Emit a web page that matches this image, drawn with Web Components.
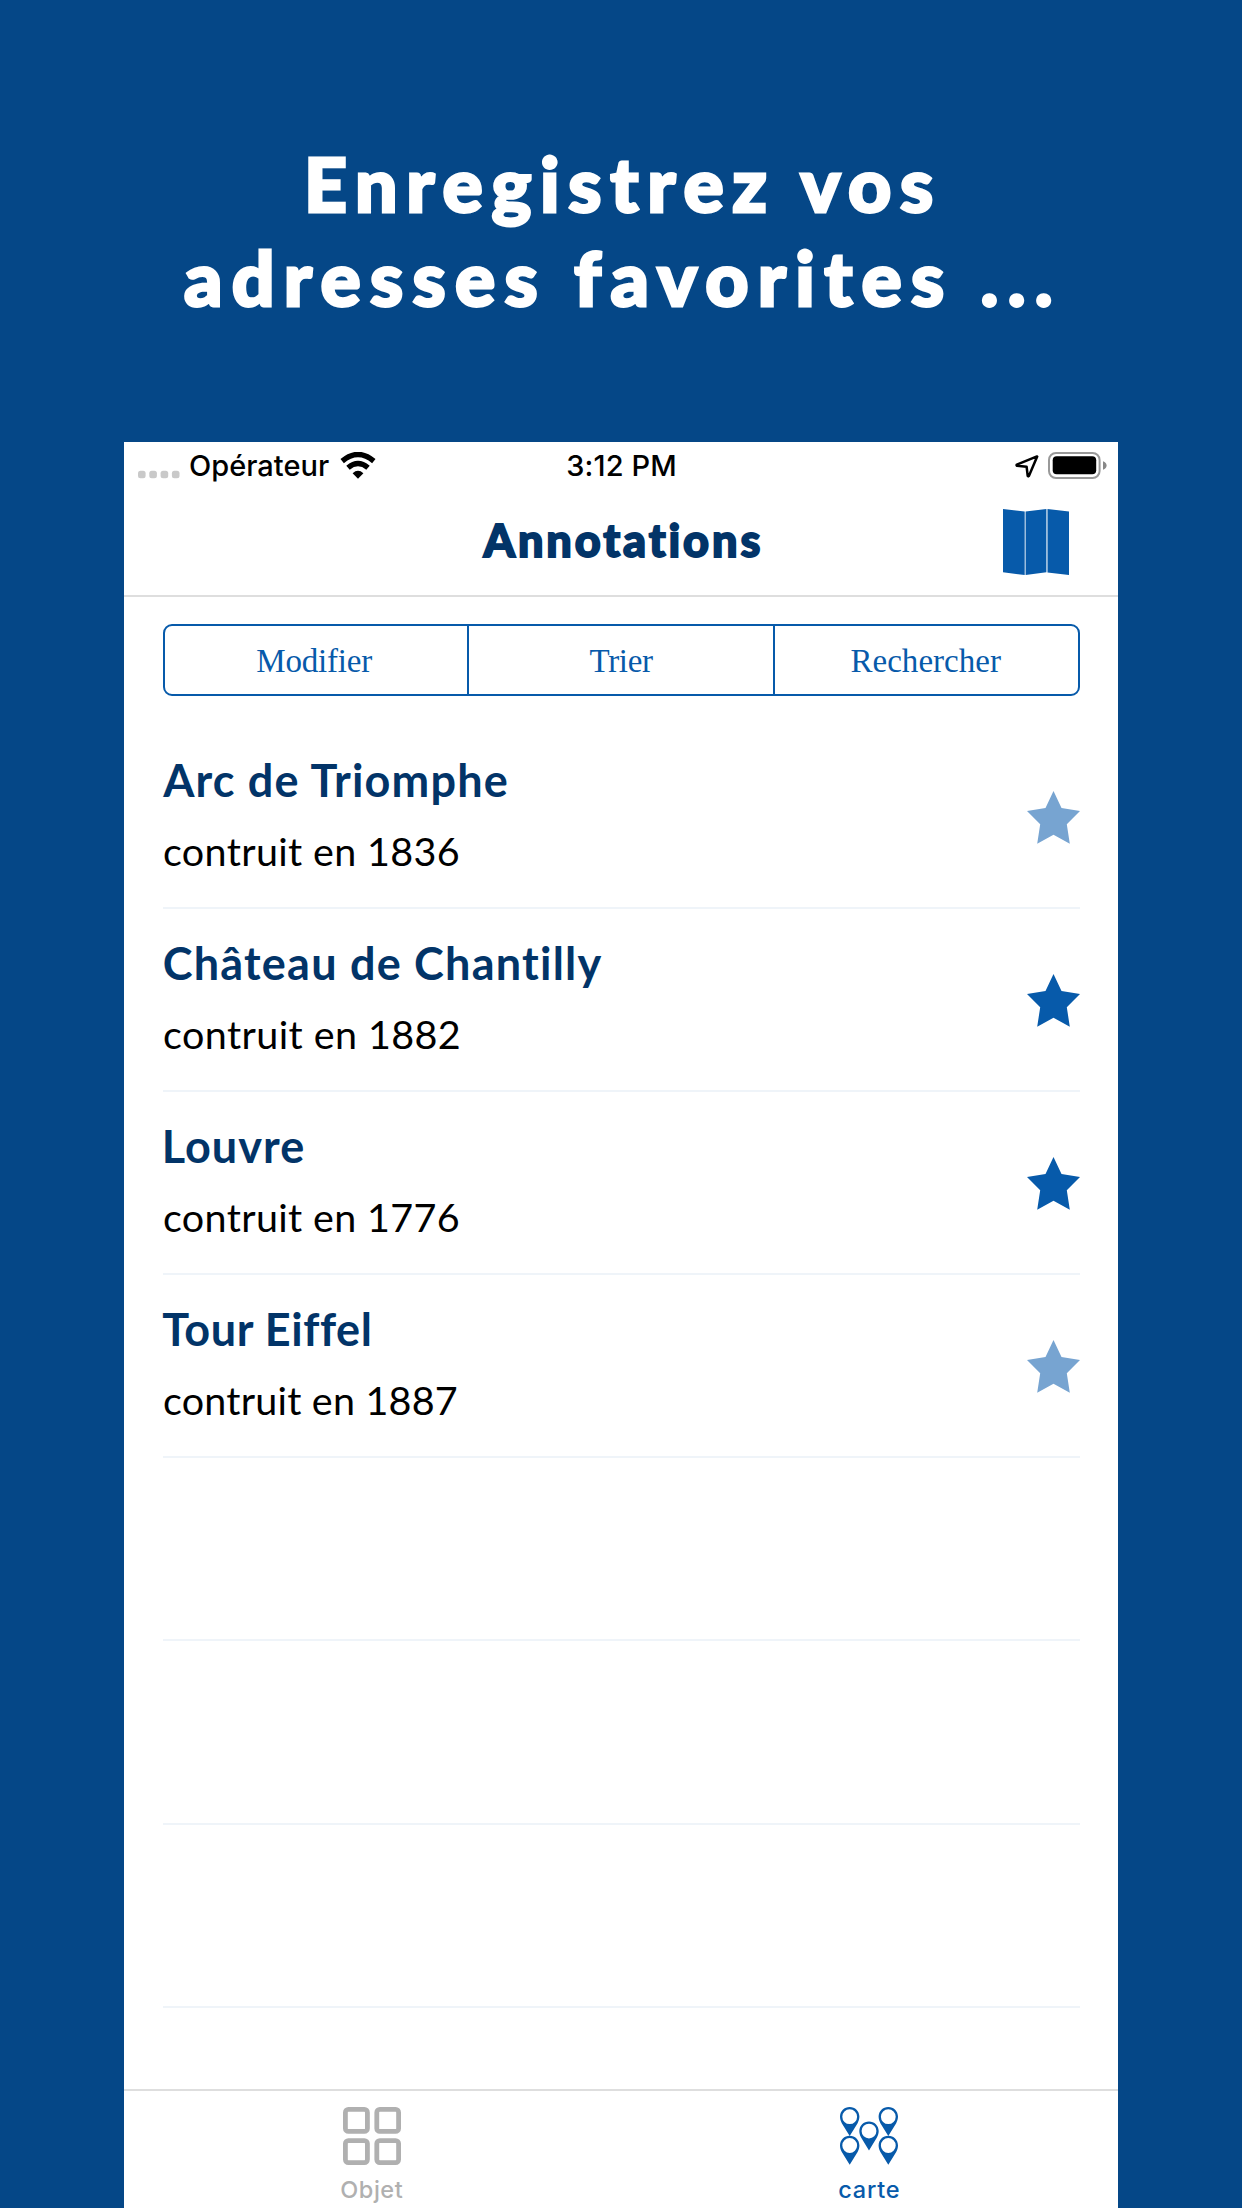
<!DOCTYPE html>
<html lang="fr">
<head>
<meta charset="utf-8">
<title>Annotations</title>
<style>
html,body{margin:0;padding:0}
body{width:1242px;height:2208px;overflow:hidden;background:#054787}
</style>
</head>
<body>
<promo-page>
  <span slot="headline"><fit-text width="624">Enregistrez vos</fit-text><fit-text width="866" shift="-3">adresses favorites ...</fit-text></span>
  <phone-screen>
    <status-bar slot="top"></status-bar>
    <nav-bar slot="top"><fit-text width="277">Annotations</fit-text></nav-bar>
    <segment-bar>
      <fit-text width="116" shift="-2.5">Modifier</fit-text>
      <fit-text width="63.5">Trier</fit-text>
      <fit-text width="150.5">Rechercher</fit-text>
    </segment-bar>
    <place-row star="soft"><fit-text slot="name" width="346" shift="-.5">Arc de Triomphe</fit-text><fit-text slot="note" width="295">contruit en 1836</fit-text></place-row>
    <place-row star="full"><fit-text slot="name" width="438" shift="1">Château de Chantilly</fit-text><fit-text slot="note" width="295">contruit en 1882</fit-text></place-row>
    <place-row star="full"><fit-text slot="name" width="138.5" shift="2">Louvre</fit-text><fit-text slot="note" width="295">contruit en 1776</fit-text></place-row>
    <place-row star="soft"><fit-text slot="name" width="208.5" shift="-.5">Tour Eiffel</fit-text><fit-text slot="note" width="293">contruit en 1887</fit-text></place-row>
    <place-row></place-row><place-row></place-row><place-row></place-row>
    <tab-bar slot="bottom">
      <tab-item icon="grid"><fit-text width="61.5">Objet</fit-text></tab-item>
      <tab-item icon="pins" active><fit-text width="59.5">carte</fit-text></tab-item>
    </tab-bar>
  </phone-screen>
</promo-page>

<script>
const ctx = document.createElement('canvas').getContext('2d');

function define(name, html, setup) {
  const t = document.createElement('template');
  t.innerHTML = html;
  customElements.define(name, class extends HTMLElement {
    constructor() {
      super();
      this.attachShadow({mode: 'open'}).append(t.content.cloneNode(true));
    }
    connectedCallback() { if (setup) setup.call(this, this.shadowRoot); }
  });
}

define('promo-page', `
<style>
:host{display:flex;flex-direction:column;align-items:center;width:1242px;height:2208px;background:#054787}
header{height:442px;box-sizing:border-box;padding-top:136px;color:#fff;font:900 75px/94px Lato,sans-serif;-webkit-text-stroke:2.8px #fff}
::slotted(span){display:flex;flex-direction:column;align-items:center}
</style>
<header><slot name="headline"></slot></header><slot></slot>`);

define('phone-screen', `
<style>
:host{display:flex;flex-direction:column;width:994px;height:1766px;background:#fff}
main{flex:1;min-height:0;padding:0 38px}
</style>
<slot name="top"></slot><main><slot></slot></main><slot name="bottom"></slot>`);

define('status-bar', `
<style>
:host{display:grid;grid-template-columns:1fr auto 1fr;height:41px;padding:6px 11.5px 0 14px;box-sizing:border-box;font:500 29px/35px Inter,sans-serif;color:#000}
.l,.r{display:flex;align-items:flex-start}
.r{justify-content:flex-end}
.dots{width:42px;margin:22px 10px 0 0}
.wifi{margin:4px 0 0 11px}
.loc{margin:6px 9px 0 0}
.bat{margin-top:4px}
.clock{margin-right:2px}
svg{display:block}
</style>
<div class="l">
<svg class="dots" width="42" height="9" viewBox="0 0 42 9" fill="#c9c9c9"><rect x="0" y=".7" width="7.6" height="7.6" rx="2.5"/><rect x="11.3" y=".7" width="7.6" height="7.6" rx="2.5"/><rect x="22.6" y=".7" width="7.6" height="7.6" rx="2.5"/><rect x="33.9" y=".7" width="7.6" height="7.6" rx="2.5"/></svg>
<fit-text width="139">Opérateur</fit-text>
<svg class="wifi" width="36" height="27" viewBox="0 0 36 27"><path d="M2.2 9.1Q18 -4.2 33.8 9.1M8 15.8Q18 7.4 28 15.8" fill="none" stroke="#000" stroke-width="5.3"/><path d="M12.6 21.2Q18 16.5 23.4 21.2L18 26.8z"/></svg>
</div>
<fit-text class="clock" width="108.2">3:12 PM</fit-text>
<div class="r">
<svg class="loc" width="24" height="24" viewBox="0 0 24 24" fill="none" stroke="#000" stroke-width="2.5" stroke-linejoin="round"><path d="M22 2.4L1.8 10.6Q1.2 11.4 2 11.8L11.6 12.7L12.7 21.9Q13.2 22.8 13.9 22L22.2 2.5z"/></svg>
<svg class="bat" width="59" height="27" viewBox="0 0 59 27"><rect x="1" y="1" width="50.6" height="25" rx="7" fill="none" stroke="#999" stroke-width="2"/><rect x="4.7" y="4.2" width="43.5" height="18" rx="4"/><path d="M55 9.2Q58.6 10.8 58.6 13.5T55 17.8z" fill="#888"/></svg>
</div>`);

define('nav-bar', `
<style>
:host{display:grid;grid-template-columns:1fr auto 1fr;height:114px;padding:0 48.7px 0 48.7px;box-sizing:border-box;border-bottom:2px solid #dedede;color:#023468;font:900 45px/54px Lato,sans-serif;-webkit-text-stroke:1.8px #023468}
.t{margin-top:30px}
svg{display:block;justify-self:end;margin-top:26px}
</style>
<i></i><div class="t"><slot></slot></div>
<svg width="66" height="67" viewBox="0 0 66 67" fill="#075aaa"><path d="M0 0L21.7 2.5V66L0 63.3zM22.6 2.6L43.4 .1V63.3L22.6 66zM44.5 .1L66 2.6V66L44.5 63.4z"/></svg>`);

define('segment-bar', `
<style>
:host{display:grid;grid-template-columns:repeat(3,1fr);height:72px;margin:27px 0 30px .5px;box-sizing:border-box;border:2px solid #075aaa;border-radius:9px;color:#075aaa;font:400 33px/36px "Liberation Serif",serif;background:linear-gradient(#075aaa,#075aaa) 302.5px 0/2px 100% no-repeat,linear-gradient(#075aaa,#075aaa) 608.5px 0/2px 100% no-repeat}
::slotted(*){justify-self:center;margin-top:17px}
</style><slot></slot>`);

define('place-row', `
<style>
:host{display:flex;justify-content:space-between;align-items:center;height:183.1px;margin-left:.5px;box-sizing:border-box;border-bottom:2px solid #eff4f9}
.text{display:flex;flex-direction:column;gap:20.5px;align-self:flex-start;padding:26.7px 0 0 .2px}
.name{color:#023468;font:700 45px/54px Lato,sans-serif}
.note{color:#000;font:400 39.5px/48px Lato,sans-serif;padding-left:1.3px}
svg{display:none;margin:1px 0 0;fill:#075aaa}
:host([star]) svg{display:block}
:host([star=soft]) svg{fill:#77a4d1}
</style>
<div class="text"><div class="name"><slot name="name"></slot></div><div class="note"><slot name="note"></slot></div></div>
<svg width="53" height="53" viewBox="0 0 53 53"><path d="M26.5 0L34.5 17L53 20L39.8 33.3L42.8 52.7L26.5 43.7L10.2 52.7L13.2 33.3L0 20L18.5 17z"/></svg>`);

define('tab-bar', `
<style>:host{display:grid;grid-template-columns:1fr 1fr;height:119px;box-sizing:border-box;border-top:2px solid #dedede}</style><slot></slot>`);

define('tab-item', `
<style>
:host{display:flex;flex-direction:column;align-items:center;color:#b0b0b0;font:500 23.5px/28px Inter,sans-serif;padding:16px 1px 0 0;gap:11px}
:host([active]){color:#075aaa}
svg{display:none}
:host([icon=grid]) .grid,:host([icon=pins]) .pins{display:block}
</style>
<svg class="grid" width="58" height="58" viewBox="0 0 58 58" fill="none" stroke="currentColor" stroke-width="4.8"><rect x="2.4" y="2.4" width="22" height="22" rx="3"/><rect x="33.8" y="2.4" width="21.8" height="22" rx="3"/><rect x="2.4" y="33.6" width="22" height="22" rx="3"/><rect x="33.8" y="33.6" width="21.8" height="22" rx="3"/></svg>
<svg class="pins" width="58" height="58" viewBox="0 0 58 58" fill="currentColor"><defs><path id="p" fill-rule="evenodd" d="M9.7 0C4.3 0 0 4.2 0 9.6C0 12 .8 14.2 1.8 16.2L9.7 29L17.6 16.2C18.6 14.2 19.4 12 19.4 9.6C19.4 4.2 15.1 0 9.7 0zM9.7 2.3A7.4 7.4 0 1 1 9.7 17.1A7.4 7.4 0 1 1 9.7 2.3z"/></defs><use href="#p"/><use href="#p" x="38.6"/><use href="#p" x="19.3" y="14.4"/><use href="#p" y="28.8"/><use href="#p" x="38.6" y="28.8"/></svg>
<slot></slot>`);

/* A single line of text whose letters are tracked so its ink spans the given width. */
define('fit-text', `<style>:host{display:block;white-space:nowrap}span{display:block}</style><span><slot></slot></span>`,
function (root) {
  const text = this.textContent, want = +this.getAttribute('width'), shift = +(this.getAttribute('shift') || 0);
  const s = getComputedStyle(this), span = root.querySelector('span');
  ctx.font = `${s.fontWeight} ${s.fontSize} ${s.fontFamily}`;
  ctx.letterSpacing = '0.01px';
  const m = ctx.measureText(text);
  const gap = (want - m.actualBoundingBoxRight - m.actualBoundingBoxLeft) / (text.length - 1);
  this.style.width = want + 'px';
  span.style.letterSpacing = gap.toFixed(3) + 'px';
  span.style.marginLeft = (m.actualBoundingBoxLeft + shift).toFixed(2) + 'px';
});
</script>
</body>
</html>
